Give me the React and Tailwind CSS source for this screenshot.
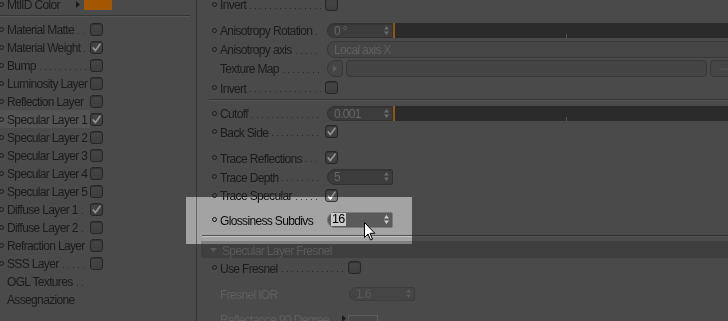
import React from 'react';

// small bits reused everywhere
const Ring = () => (
  <span className="w-[5px] h-[5px] rounded-full border border-[#1b1b1b] shrink-0 mr-[3px]" />
);

const Leader = () => (
  <span className="flex-1 h-px mt-[8px] mx-[4px] bg-[linear-gradient(to_right,#2a2a2a_1px,transparent_1px)] bg-[length:5px_1px]" />
);

const Check = ({ checked }) => (
  <span className="w-[13px] h-[13px] shrink-0 rounded-[3px] border border-[#262626] bg-gradient-to-b from-[#464646] to-[#3e3e3e] shadow-[inset_0_1px_1px_#333] flex items-center justify-center">
    {checked && (
      <svg width="9" height="9" viewBox="0 0 9 9">
        <path d="M1.3 5 L3.4 7.6 L8 1.2" fill="none" stroke="#939393" strokeWidth="1.7" strokeLinecap="round" strokeLinejoin="round" />
      </svg>
    )}
  </span>
);

const Spin = ({ c = '#6a6a6a' }) => (
  <svg width="5" height="9" viewBox="0 0 5 9" className="shrink-0">
    <path d="M2.5 0 L5 3.5 L0 3.5Z M0 5.5 L5 5.5 L2.5 9Z" fill={c} />
  </svg>
);

const Tri = ({ c = '#1b1b1b' }) => (
  <svg width="4" height="7" viewBox="0 0 4 7" className="shrink-0">
    <path d="M0 0 L4 3.5 L0 7Z" fill={c} />
  </svg>
);

const NumField = ({ value, h = 'h-[15px]', right = 'rounded-r-[2px]' }) => (
  <div className={`w-[66px] ${h} shrink-0 rounded-l-[8px] ${right} bg-[#3c3c3c] border border-[#323232] shadow-[inset_0_1px_0_#353535] flex items-center pl-[6px] pr-[3px] text-[#676767]`}>
    <span className="pt-[1px]">{value}</span>
    <span className="ml-auto flex">
      <Spin />
    </span>
  </div>
);

const Slider = () => (
  <>
    <span className="w-[2px] h-[15px] bg-[#8a5a16] shrink-0" />
    <div className="w-[400px] h-[15px] shrink-0 bg-[#2b2b2b] flex items-end pl-[171px]">
      <span className="w-px h-[4px] bg-[#555]" />
    </div>
  </>
);

const leftRows = [
  { l: 'Material Matte' },
  { l: 'Material Weight', c: true },
  { l: 'Bump' },
  { l: 'Luminosity Layer' },
  { l: 'Reflection Layer' },
  { l: 'Specular Layer 1', c: true, active: true },
  { l: 'Specular Layer 2' },
  { l: 'Specular Layer 3' },
  { l: 'Specular Layer 4' },
  { l: 'Specular Layer 5' },
  { l: 'Diffuse Layer 1', c: true },
  { l: 'Diffuse Layer 2' },
  { l: 'Refraction Layer' },
  { l: 'SSS Layer' },
  { l: 'OGL Textures', ring: false, box: false },
  { l: 'Assegnazione', ring: false, box: false, lead: false },
];

const LeftRow = ({ l, c, active, ring = true, box = true, lead = true }) => (
  <div className="flex items-center h-[18px]">
    <div className={`w-[90px] h-[18px] flex items-center ${ring ? 'pl-0' : 'pl-[7px]'} ${active ? 'bg-[#535353]' : ''}`}>
      {ring && <span className="-ml-[1px] flex"><Ring /></span>}
      <span className="whitespace-nowrap pt-[2px]">{l}</span>
      {lead && <Leader />}
    </div>
    {box && <Check checked={c} />}
  </div>
);

const Row = ({ label, ring = true, dim, w = 'w-[113px]', h = 'h-[19px]', extra = '', lead = true, children }) => (
  <div className={`flex items-center ${h} ${extra} pl-[15px] ${ring ? '' : 'pl-[23px]'}`}>
    <div className={`${ring ? w : w === 'w-[113px]' ? 'w-[105px]' : 'w-[128px]'} flex items-center shrink-0`}>
      {ring && <Ring />}
      <span className={`whitespace-nowrap pt-[2px] ${dim ? 'text-[#5f5f5f]' : ''}`}>{label}</span>
      {lead && <Leader />}
    </div>
    {children}
  </div>
);

export default function App() {
  return (
    <div className="relative w-[728px] h-[321px] overflow-hidden bg-[#4a4a4a] flex text-[12px] tracking-[-0.65px] leading-none text-[#1b1b1b] font-['Liberation_Sans',Arial,sans-serif]">
      {/* left: layer list */}
      <div className="w-[197px] shrink-0 border-r border-[#363636]">
        <div className="-mt-[5px] h-[18px] flex items-center">
          <span className="-ml-[1px] flex"><Ring /></span>
          <span className="w-[69px] whitespace-nowrap pt-[2px]">MtlID Color</span>
          <Tri />
          <span className="ml-[4px] w-[28px] h-[12px] bg-[#a35800]" />
        </div>
        <div className="h-[7px] pt-[2px] pr-[6px]">
          <div className="border-t border-[#363636] border-b border-b-[#555]" />
        </div>
        {leftRows.map((r) => (
          <LeftRow key={r.l} {...r} />
        ))}
      </div>

      {/* right: attributes */}
      <div className="flex-1 min-w-0">
        <Row label="Invert" h="h-[20px]" extra="-mt-[6px]">
          <Check />
        </Row>
        <Row label="Anisotropy Rotation" h="h-[20px]" extra="mt-[6px]">
          <span className="ml-[2px] flex items-center">
            <NumField value="0 °" right="rounded-r-none" />
            <Slider />
          </span>
        </Row>
        <Row label="Anisotropy axis" h="h-[18px]">
          <div className="ml-[2px] w-[420px] h-[17px] shrink-0 rounded-l-[8px] bg-[#454545] border border-[#383838] flex items-center pl-[6px] pt-[1px] text-[#5f5f5f]">
            Local axis X
          </div>
        </Row>
        <Row label="Texture Map" ring={false} h="h-[20px]">
          <div className="ml-[2px] flex items-center gap-[3px]">
            <div className="w-[16px] h-[17px] rounded-l-[8px] rounded-r-[3px] bg-[#454545] border border-[#383838] flex items-center justify-center">
              <Tri c="#5c5c5c" />
            </div>
            <div className="w-[361px] h-[17px] rounded-[4px] bg-[#444] border border-[#383838]" />
            <div className="w-[30px] h-[17px] rounded-[4px] bg-[#454545] border border-[#383838] flex items-end pb-[4px] pl-[9px] text-[#5f5f5f]">
              ...
            </div>
          </div>
        </Row>
        <Row label="Invert">
          <Check />
        </Row>
        <div className="h-[7px] pt-[2px] pl-[12px]">
          <div className="border-t border-[#353535] border-b border-b-[#575757]" />
        </div>
        <Row label="Cutoff" h="h-[18px]">
          <span className="ml-[2px] flex items-center">
            <NumField value="0.001" right="rounded-r-none" />
            <Slider />
          </span>
        </Row>
        <Row label="Back Side">
          <Check checked />
        </Row>
        <Row label="Trace Reflections" extra="mt-[7px]">
          <Check checked />
        </Row>
        <Row label="Trace Depth">
          <span className="ml-[2px] flex">
            <NumField value="5" h="h-[16px]" />
          </span>
        </Row>
        <Row label="Trace Specular" h="h-[18px]">
          <Check checked />
        </Row>
        <Row label="Glossiness Subdivs" extra="mt-[6px]" lead={false}>
          <div className="ml-[2px] w-[66px] h-[16px] shrink-0 rounded-l-[8px] rounded-r-[2px] bg-[#333] border border-[#3d3d3d] flex items-center pl-[3px] pr-[3px]">
            <span className="bg-[#565656] px-[1px] h-[13px] flex items-center text-[#151515] text-[12.5px]">16</span>
            <span className="ml-auto flex">
              <Spin c="#585858" />
            </span>
          </div>
        </Row>
        <div className="h-[12px] pt-[6px] pl-[5px]">
          <div className="border-t border-[#303030] border-b border-b-[#555]" />
        </div>
        <div className="ml-[4px] h-[17px] bg-[#3f3f3f] flex items-center pl-[9px] text-[#5a5a5a]">
          <svg width="7" height="4" viewBox="0 0 7 4" className="mr-[5px]">
            <path d="M0 0 L7 0 L3.5 4Z" fill="#5a5a5a" />
          </svg>
          <span className="pt-[2px]">Specular Layer Fresnel</span>
        </div>
        <Row label="Use Fresnel" w="w-[136px]">
          <Check />
        </Row>
        <Row label="Fresnel IOR" ring={false} dim w="w-[136px]" extra="mt-[7px]" lead={false}>
          <div className="ml-[1px] w-[66px] h-[14px] shrink-0 rounded-l-[7px] rounded-r-[2px] bg-[#454545] border border-[#3d3d3d] flex items-center pl-[6px] pr-[3px] text-[#5a5a5a]">
            <span className="pt-[1px]">1.6</span>
            <span className="ml-auto flex">
              <Spin c="#5a5a5a" />
            </span>
          </div>
        </Row>
        <Row label="Reflectance 90 Degree" ring={false} dim w="w-[136px]" extra="mt-[6px]" lead={false}>
          <span className="-ml-[6px] mr-[2px] flex"><Tri /></span>
          <span className="w-[30px] h-[14px] mt-[6px] border border-[#5c5c5c] bg-[#484848]" />
        </Row>
      </div>

      {/* spotlight over the glossiness row */}
      <div className="absolute left-[186px] top-[197px] w-[226px] h-[48px] z-10 backdrop-brightness-[2.03] backdrop-contrast-[1.56]" />

      {/* mouse pointer */}
      <svg width="12" height="19" viewBox="0 0 12 19" className="absolute left-[364px] top-[222px] z-20">
        <path d="M0.5 0.5 L0.5 15.5 L4 12 L6.5 18 L8.5 17.2 L6 11.3 L10.8 11.3 Z" fill="#fff" stroke="#000" strokeWidth="1" />
      </svg>
    </div>
  );
}
